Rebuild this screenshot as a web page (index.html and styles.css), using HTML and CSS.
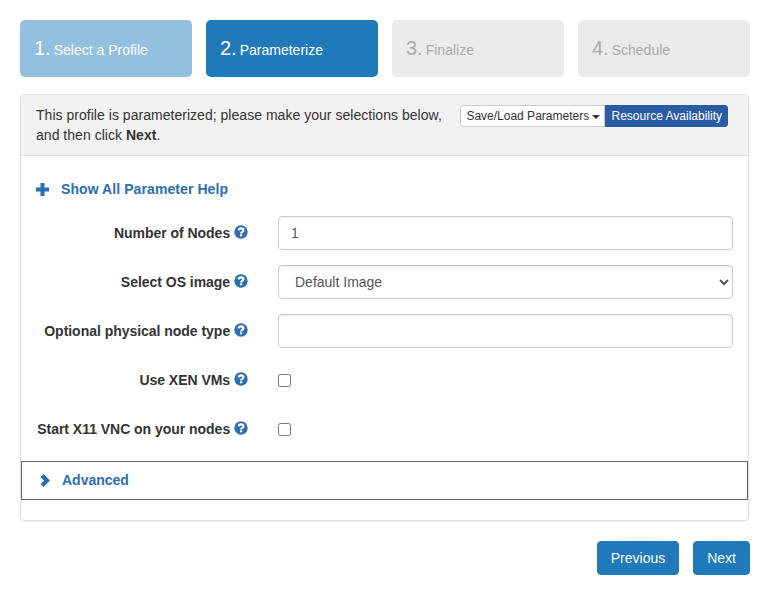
FILE: index.html
```html
<!DOCTYPE html>
<html lang="en">

<head>
    <meta charset="UTF-8">
    <title>Parameterize</title>
    <link rel="stylesheet" href="styles.css">
</head>

<body>
    <ol class="steps">
        <li class="step step-done"><span class="step-num">1.</span> Select a Profile</li>
        <li class="step step-active"><span class="step-num">2.</span> Parameterize</li>
        <li class="step"><span class="step-num">3.</span> Finalize</li>
        <li class="step"><span class="step-num">4.</span> Schedule</li>
    </ol>

    <div class="panel">
        <div class="panel-heading">
            <p class="panel-text">This profile is parameterized; please make your selections below, and then click <b>Next</b>.</p>
            <div class="btn-group">
                <button class="btn-xs btn-plain" type="button">Save/Load Parameters <span class="caret"></span></button>
                <button class="btn-xs btn-navy" type="button">Resource Availability</button>
            </div>
        </div>

        <div class="panel-body">
            <a class="help-toggle" href="#">
                <svg class="plus-icon" viewBox="0 0 13 13"><path d="M4.5 0h4v4.5H13v4H8.500V13h-4V8.500H0v-4h4.500z"/></svg>
                Show All Parameter Help
            </a>

            <form class="param-form">
                <div class="param-row">
                    <label class="param-label" for="nodes">Number of Nodes
                        <svg class="help-icon" viewBox="0 0 14 14"><circle cx="7" cy="7" r="6.7"/><path class="q" d="M4.7 5.4C4.8 4 5.8 3.300 7.100 3.300c1.300 0 2.300.8 2.300 1.900 0 1.700-2.300 1.700-2.300 3.300"/><rect class="dot" x="6" y="9.300" width="2.200" height="2"/></svg>
                    </label>
                    <input class="param-input" id="nodes" value="1">
                </div>
                <div class="param-row">
                    <label class="param-label" for="image">Select OS image
                        <svg class="help-icon" viewBox="0 0 14 14"><circle cx="7" cy="7" r="6.7"/><path class="q" d="M4.7 5.4C4.8 4 5.8 3.300 7.100 3.300c1.300 0 2.300.8 2.300 1.900 0 1.700-2.300 1.700-2.300 3.300"/><rect class="dot" x="6" y="9.300" width="2.200" height="2"/></svg>
                    </label>
                    <select class="param-input" id="image">
                        <option>Default Image</option>
                    </select>
                </div>
                <div class="param-row">
                    <label class="param-label" for="nodetype">Optional physical node type
                        <svg class="help-icon" viewBox="0 0 14 14"><circle cx="7" cy="7" r="6.7"/><path class="q" d="M4.7 5.4C4.8 4 5.8 3.300 7.100 3.300c1.300 0 2.300.8 2.300 1.900 0 1.700-2.300 1.700-2.300 3.300"/><rect class="dot" x="6" y="9.300" width="2.200" height="2"/></svg>
                    </label>
                    <input class="param-input" id="nodetype">
                </div>
                <div class="param-row">
                    <label class="param-label" for="xen">Use XEN VMs
                        <svg class="help-icon" viewBox="0 0 14 14"><circle cx="7" cy="7" r="6.7"/><path class="q" d="M4.7 5.4C4.8 4 5.8 3.300 7.100 3.300c1.300 0 2.300.8 2.300 1.900 0 1.700-2.300 1.700-2.300 3.300"/><rect class="dot" x="6" y="9.300" width="2.200" height="2"/></svg>
                    </label>
                    <input class="param-check" id="xen" type="checkbox">
                </div>
                <div class="param-row">
                    <label class="param-label" for="vnc">Start X11 VNC on your nodes
                        <svg class="help-icon" viewBox="0 0 14 14"><circle cx="7" cy="7" r="6.7"/><path class="q" d="M4.7 5.4C4.8 4 5.8 3.300 7.100 3.300c1.300 0 2.300.8 2.300 1.900 0 1.700-2.300 1.700-2.300 3.300"/><rect class="dot" x="6" y="9.300" width="2.200" height="2"/></svg>
                    </label>
                    <input class="param-check" id="vnc" type="checkbox">
                </div>
            </form>
        </div>

        <div class="advanced">
            <svg class="chevron-icon" viewBox="0 0 10 13"><path d="M3.500 0L10 6.500 3.500 13 .5 10l3.500-3.500L.5 3z"/></svg>
            <a class="advanced-link" href="#">Advanced</a>
        </div>
    </div>

    <div class="wizard-nav">
        <button class="btn-nav" type="button">Previous</button>
        <button class="btn-nav" type="button">Next</button>
    </div>
</body>

</html>
```

FILE: styles.css
```css
* {
    box-sizing: border-box;
}

body {
    margin: 0;
    padding: 20px 21px 19px 20px;
    font-family: "Liberation Sans", Arial, sans-serif;
    font-size: 14px;
    line-height: 20px;
    color: #333;
    background-color: #fff;
}

.steps {
    display: grid;
    grid-template-columns: repeat(4, 172px);
    column-gap: 14px;
    list-style: none;
    margin: 0 0 17px;
    padding: 0;
}

.step {
    height: 57px;
    padding: 18px 14px 0;
    display: flex;
    align-items: baseline;
    gap: 3px;
    background-color: #ebebeb;
    border-radius: 5px;
    color: #aaa;
}

.step-num {
    font-size: 20px;
}

.step-done {
    background-color: #92c0de;
    color: #fff;
}

.step-active {
    background-color: #2079b8;
    color: #fff;
}

.panel {
    width: 729px;
    border: 1px solid #ddd;
    border-radius: 4px;
    padding-bottom: 20px;
    box-shadow: 0 1px 1px rgba(0, 0, 0, 0.05);
}

.panel-heading {
    display: flex;
    justify-content: space-between;
    align-items: flex-start;
    padding: 10px 20px 10px 15px;
    background-color: #f2f2f2;
    border-bottom: 1px solid #ddd;
    border-radius: 3px 3px 0 0;
}

.panel-text {
    margin: 0;
    width: 412px;
    letter-spacing: 0.03px;
}

.btn-group {
    display: flex;
}

.btn-xs {
    height: 22px;
    padding: 0 5px;
    font-family: inherit;
    font-size: 12px;
    line-height: 18px;
    border: 1px solid #ccc;
    white-space: nowrap;
}

.btn-plain {
    padding-right: 4px;
    background-color: #fff;
    color: #333;
    border-radius: 3px 0 0 3px;
}

.btn-navy {
    background-color: #2a5ba5;
    border-color: #2a5ba5;
    color: #fff;
    border-radius: 0 3px 3px 0;
}

.caret {
    display: inline-block;
    vertical-align: middle;
    border-top: 4px solid #333;
    border-left: 4px solid transparent;
    border-right: 4px solid transparent;
}

.panel-body {
    padding: 23px 15px 0;
}

.help-toggle {
    display: flex;
    align-items: center;
    gap: 12px;
    font-weight: bold;
    letter-spacing: 0.08px;
    color: #2b6eb2;
    text-decoration: none;
}

.plus-icon {
    width: 13px;
    height: 13px;
    fill: #2b6eb2;
}

.param-form {
    margin-top: 17px;
}

.param-row {
    display: grid;
    grid-template-columns: 212px 455px;
    column-gap: 30px;
    align-items: center;
    height: 34px;
    margin-bottom: 15px;
}

.param-label {
    font-weight: bold;
    text-align: right;
    white-space: nowrap;
    letter-spacing: -0.03px;
}

.help-icon {
    width: 14px;
    height: 14px;
    vertical-align: -1px;
}

.help-icon circle {
    fill: #2b6eb2;
}

.help-icon .q {
    fill: none;
    stroke: #fff;
    stroke-width: 2.2;
}

.help-icon .dot {
    fill: #fff;
}

.param-input {
    width: 455px;
    height: 34px;
    padding: 6px 12px;
    font-family: inherit;
    font-size: 14px;
    color: #555;
    background-color: #fff;
    border: 1px solid #ccc;
    border-radius: 4px;
    box-shadow: inset 0 1px 1px rgba(0, 0, 0, 0.075);
}

.param-check {
    width: 13px;
    height: 13px;
    margin: 0;
}

.advanced {
    display: flex;
    align-items: center;
    height: 39px;
    padding-left: 18px;
    gap: 12px;
    border: 1px solid #666;
}

.chevron-icon {
    width: 10px;
    height: 13px;
    fill: #2b6eb2;
}

.advanced-link {
    margin-bottom: 2px;
    font-weight: bold;
    color: #2b6eb2;
    text-decoration: none;
}

.wizard-nav {
    display: flex;
    justify-content: flex-end;
    gap: 14px;
    margin-top: 20px;
}

.btn-nav {
    height: 34px;
    padding: 6px 13px;
    font-family: inherit;
    font-size: 14px;
    color: #fff;
    background-color: #2079b8;
    border: 1px solid #2079b8;
    border-radius: 4px;
}
```
